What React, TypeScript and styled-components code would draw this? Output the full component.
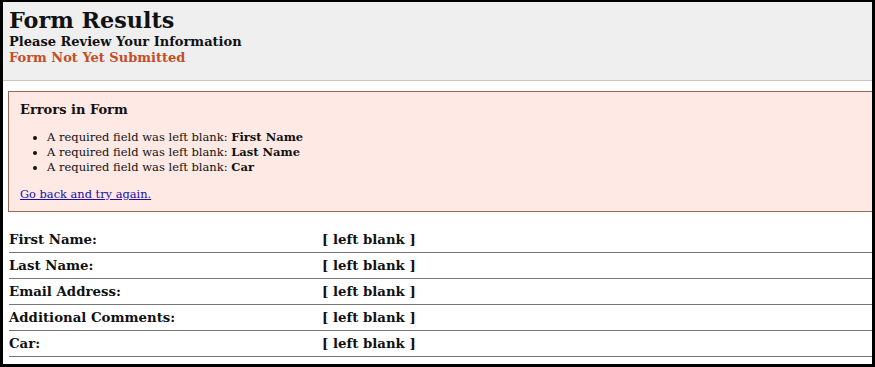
import styled, { createGlobalStyle } from 'styled-components';

const GlobalStyle = createGlobalStyle`
  html, body {
    margin: 0;
    padding: 0;
    background: #fff;
  }
  body {
    font-family: "DejaVu Serif", Georgia, serif;
    color: #111;
  }
`;

const fields = [
  { label: 'First Name:', value: '' },
  { label: 'Last Name:', value: '' },
  { label: 'Email Address:', value: '' },
  { label: 'Additional Comments:', value: '' },
  { label: 'Car:', value: '' },
];

const errors = ['First Name', 'Last Name', 'Car'];

const App = () => {
  return (
    <>
      <GlobalStyle />
      <Frame>
        <Header>
          <Title>Form Results</Title>
          <Subtitle>Please Review Your Information</Subtitle>
          <Status>Form Not Yet Submitted</Status>
        </Header>
        <ErrorBox>
          <ErrorTitle>Errors in Form</ErrorTitle>
          <ErrorList>
            {errors.map((name) => (
              <li key={name}>
                A required field was left blank: <strong>{name}</strong>
              </li>
            ))}
          </ErrorList>
          <BackLink href="#">Go back and try again.</BackLink>
        </ErrorBox>
        <Results>
          {fields.map((f) => (
            <Row key={f.label}>
              <Label>{f.label}</Label>
              <Value>{f.value || '[ left blank ]'}</Value>
            </Row>
          ))}
        </Results>
      </Frame>
    </>
  );
};

const Frame = styled.div`
  width: 875px;
  height: 367px;
  box-sizing: border-box;
  border-style: solid;
  border-color: #000;
  border-width: 2px 3px 3px 3px;
  overflow: hidden;
`;

const Header = styled.header`
  background: #efefef;
  border-bottom: 1px solid #c9c3bb;
  padding: 5px 6px 0;
  height: 73px;
`;

const Title = styled.h1`
  margin: 0;
  font-size: 22.3px;
  line-height: 26px;
  font-weight: bold;
  color: #111;
`;

const Subtitle = styled.h2`
  margin: 1px 0 0;
  font-size: 13px;
  line-height: 16px;
  font-weight: bold;
  color: #111;
`;

const Status = styled.h3`
  margin: 0;
  font-size: 13px;
  line-height: 16px;
  font-weight: bold;
  color: #c54d26;
`;

const ErrorBox = styled.section`
  margin: 10px -10px 0 5px;
  background: #fee9e5;
  border: 1px solid #9b6a55;
  padding: 10px 11px 7px;
  height: 102px;
`;

const ErrorTitle = styled.h4`
  margin: 0;
  font-size: 13px;
  line-height: 16px;
  font-weight: bold;
`;

const ErrorList = styled.ul`
  margin: 12px 0 8px;
  padding-left: 27px;
  font-size: 11.5px;
  line-height: 15px;

  strong {
    font-weight: bold;
  }
`;

const BackLink = styled.a`
  font-size: 11.4px;
  line-height: 15px;
  color: #1a0dab;
  text-decoration: underline;
`;

const Results = styled.div`
  margin-top: 15px;
  padding-left: 6px;
`;

const Row = styled.div`
  display: grid;
  grid-template-columns: 313px 1fr;
  height: 25px;
  border-bottom: 1px solid #777;
  align-items: end;
`;

const Label = styled.span`
  font-size: 13.3px;
  line-height: 20px;
  font-weight: bold;
  padding-bottom: 2px;
`;

const Value = styled(Label)``;

export default App;
